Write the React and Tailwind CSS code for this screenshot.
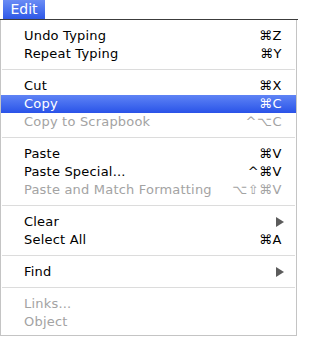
import React from 'react';

const groups = [
    [
        { label: 'Undo Typing', keys: '⌘Z' },
        { label: 'Repeat Typing', keys: '⌘Y' },
    ],
    [
        { label: 'Cut', keys: '⌘X' },
        { label: 'Copy', keys: '⌘C', active: true },
        { label: 'Copy to Scrapbook', keys: '^⌥C', disabled: true },
    ],
    [
        { label: 'Paste', keys: '⌘V' },
        { label: 'Paste Special...', keys: '^⌘V' },
        { label: 'Paste and Match Formatting', keys: '⌥⇧⌘V', disabled: true },
    ],
    [
        { label: 'Clear', submenu: true },
        { label: 'Select All', keys: '⌘A' },
    ],
    [{ label: 'Find', submenu: true }],
    [
        { label: 'Links...', disabled: true },
        { label: 'Object', disabled: true },
    ],
];

const MenuItem = ({ item }) => {
    let rowClass = 'text-black';
    if (item.active) rowClass = 'bg-gradient-to-b from-[#5f83f5] to-[#2a52e8] text-white';
    else if (item.disabled) rowClass = 'text-[#a3a3a3]';

    return (
        <div className={`flex h-[18px] items-center justify-between pl-[23px] pr-[14px] leading-[16px] ${rowClass}`}>
            <span className="tracking-[0.2px]">{item.label}</span>
            {item.keys && <span className="tracking-[0.5px]">{item.keys}</span>}
            {item.submenu && (
                <svg width="8" height="10" viewBox="0 0 8 10" className="mr-[-2px]">
                    <path d="M0 0 L8 5 L0 10 Z" fill="#5c5c5c" />
                </svg>
            )}
        </div>
    );
};

export default function App() {
    return (
        <div className="h-[338px] w-[298px] bg-white text-[13px]" style={{ fontFamily: '"DejaVu Sans", "Liberation Sans", sans-serif' }}>
            <div className="flex h-[20px] border-b border-[#3c3c3c]">
                <div className="ml-[3px] flex h-[19px] w-[42px] items-center justify-center bg-gradient-to-b from-[#6a8cf5] to-[#2f57e7] text-[14px] text-white">
                    Edit
                </div>
            </div>
            <div className="mr-[1px] border-x border-b border-[#c4c4c4] bg-white pt-[7px] pb-[4px]">
                {groups.map((group, i) => (
                    <div key={i}>
                        {i > 0 && <div className="mt-[6px] mb-[7px] mx-[1px] h-px bg-[#dcdcdc]" />}
                        {group.map((item) => (
                            <MenuItem key={item.label} item={item} />
                        ))}
                    </div>
                ))}
            </div>
        </div>
    );
}
